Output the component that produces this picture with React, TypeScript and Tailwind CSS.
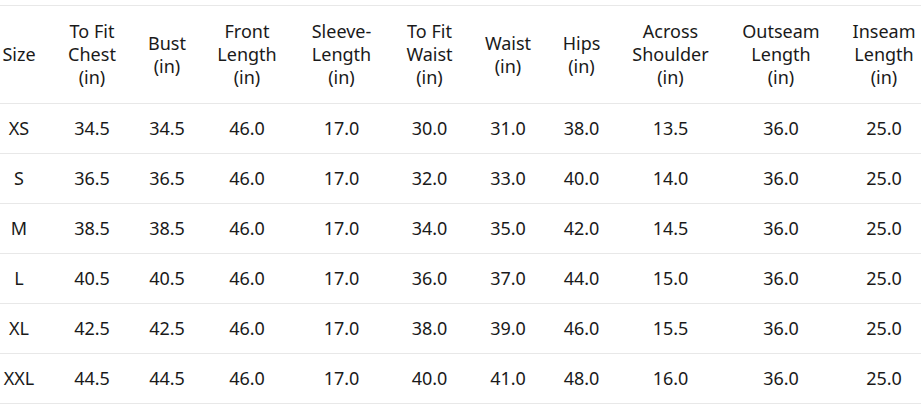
import React from 'react';

const columns: { lines: string[]; width: string; pad?: string }[] = [
  { lines: ['Size'], width: 'w-[51px]', pad: 'pr-[13px]' },
  { lines: ['To Fit', 'Chest', '(in)'], width: 'w-[82px]' },
  { lines: ['Bust', '(in)'], width: 'w-[68px]' },
  { lines: ['Front', 'Length', '(in)'], width: 'w-[92px]' },
  { lines: ['Sleeve-', 'Length', '(in)'], width: 'w-[97px]' },
  { lines: ['To Fit', 'Waist', '(in)'], width: 'w-[79px]' },
  { lines: ['Waist', '(in)'], width: 'w-[78px]' },
  { lines: ['Hips', '(in)'], width: 'w-[69px]' },
  { lines: ['Across', 'Shoulder', '(in)'], width: 'w-[109px]' },
  { lines: ['Outseam', 'Length', '(in)'], width: 'w-[112px]' },
  { lines: ['Inseam', 'Length', '(in)'], width: 'w-[94px]' },
];

const rows: string[][] = [
  ['XS', '34.5', '34.5', '46.0', '17.0', '30.0', '31.0', '38.0', '13.5', '36.0', '25.0'],
  ['S', '36.5', '36.5', '46.0', '17.0', '32.0', '33.0', '40.0', '14.0', '36.0', '25.0'],
  ['M', '38.5', '38.5', '46.0', '17.0', '34.0', '35.0', '42.0', '14.5', '36.0', '25.0'],
  ['L', '40.5', '40.5', '46.0', '17.0', '36.0', '37.0', '44.0', '15.0', '36.0', '25.0'],
  ['XL', '42.5', '42.5', '46.0', '17.0', '38.0', '39.0', '46.0', '15.5', '36.0', '25.0'],
  ['XXL', '44.5', '44.5', '46.0', '17.0', '40.0', '41.0', '48.0', '16.0', '36.0', '25.0'],
];

export default function App() {
  return (
    <div className="w-[921px] h-[407px] overflow-hidden bg-white pt-[5px]">
      <table
        className="w-[931px] table-fixed border-collapse text-[18px] leading-[23px] text-[#1a1a1a]"
        style={{ fontFamily: '"Noto Sans", Roboto, sans-serif' }}
      >
        <colgroup>
          {columns.map((c, i) => (
            <col key={i} className={c.width} />
          ))}
        </colgroup>
        <thead>
          <tr className="h-[98px] border-y border-[#e8e8e8]">
            {columns.map((c, i) => (
              <th key={i} className={`p-0 font-normal text-center align-middle whitespace-nowrap ${c.pad ?? ''}`}>
                {c.lines.map((l, j) => (
                  <div key={j}>{l}</div>
                ))}
              </th>
            ))}
          </tr>
        </thead>
        <tbody>
          {rows.map((r, i) => (
            <tr key={i} className="h-[50px] border-b border-[#e8e8e8]">
              {r.map((v, j) => (
                <td key={j} className={`p-0 text-center align-middle ${j === 0 ? 'pr-[13px]' : ''}`}>
                  {v}
                </td>
              ))}
            </tr>
          ))}
        </tbody>
      </table>
    </div>
  );
}
